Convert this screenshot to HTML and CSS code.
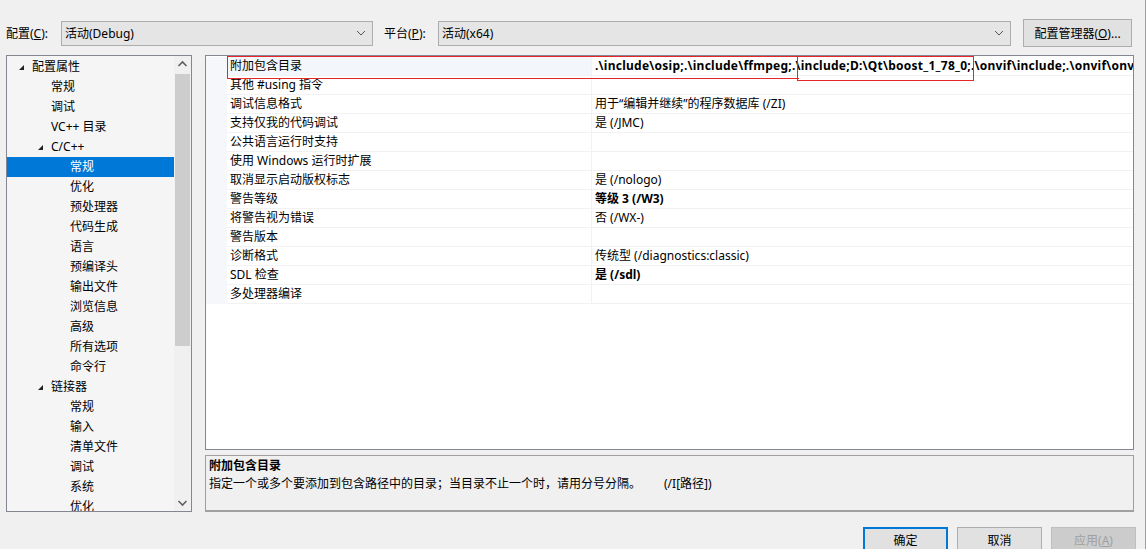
FILE: index.html
```html
<!DOCTYPE html>
<html lang="zh-CN">
<head>
    <meta charset="UTF-8">
    <title>属性页</title>
    <link rel="stylesheet" href="styles.css">
</head>
<body>

<div class="topbar">
    <label class="top-label">配置(<u>C</u>):</label>
    <div class="combo combo-config">
        <span>活动(Debug)</span>
        <svg class="chev" width="10" height="6" viewBox="0 0 10 6"><polyline points="1,1 5,5 9,1" fill="none" stroke="#555" stroke-width="1"/></svg>
    </div>
    <label class="top-label platform-label">平台(<u>P</u>):</label>
    <div class="combo combo-platform">
        <span>活动(x64)</span>
        <svg class="chev" width="10" height="6" viewBox="0 0 10 6"><polyline points="1,1 5,5 9,1" fill="none" stroke="#555" stroke-width="1"/></svg>
    </div>
    <button class="btn btn-manager">配置管理器(<u>O</u>)...</button>
</div>

<div class="main">
    <!-- 左侧树 -->
    <div class="tree">
        <div class="tree-items">
            <div class="node lv1"><span class="tri"></span>配置属性</div>
            <div class="node lv2">常规</div>
            <div class="node lv2">调试</div>
            <div class="node lv2">VC++ 目录</div>
            <div class="node lv2"><span class="tri"></span>C/C++</div>
            <div class="node lv3 selected">常规</div>
            <div class="node lv3">优化</div>
            <div class="node lv3">预处理器</div>
            <div class="node lv3">代码生成</div>
            <div class="node lv3">语言</div>
            <div class="node lv3">预编译头</div>
            <div class="node lv3">输出文件</div>
            <div class="node lv3">浏览信息</div>
            <div class="node lv3">高级</div>
            <div class="node lv3">所有选项</div>
            <div class="node lv3">命令行</div>
            <div class="node lv2"><span class="tri"></span>链接器</div>
            <div class="node lv3">常规</div>
            <div class="node lv3">输入</div>
            <div class="node lv3">清单文件</div>
            <div class="node lv3">调试</div>
            <div class="node lv3">系统</div>
            <div class="node lv3">优化</div>
        </div>
        <div class="vscroll">
            <svg class="arrow" width="17" height="17" viewBox="0 0 17 17"><polyline points="4.5,10 8.5,6 12.5,10" fill="none" stroke="#606060" stroke-width="1.6"/></svg>
            <div class="track"><div class="thumb"></div></div>
            <svg class="arrow" width="17" height="17" viewBox="0 0 17 17"><polyline points="4.5,7 8.5,11 12.5,7" fill="none" stroke="#606060" stroke-width="1.6"/></svg>
        </div>
    </div>

    <div class="right">
        <!-- 属性表 -->
        <div class="grid">
            <div class="row first">
                <div class="gut"></div><div class="name">附加包含目录</div>
                <div class="val bold path">.\include\osip;.\include\ffmpeg;.\include;D:\Qt\boost_1_78_0;.\onvif\include;.\onvif\onvif;.\onvif\plugin</div>
            </div>
            <div class="row"><div class="gut"></div><div class="name">其他 #using 指令</div><div class="val"></div></div>
            <div class="row"><div class="gut"></div><div class="name">调试信息格式</div><div class="val">用于“编辑并继续”的程序数据库 (/ZI)</div></div>
            <div class="row"><div class="gut"></div><div class="name">支持仅我的代码调试</div><div class="val">是 (/JMC)</div></div>
            <div class="row"><div class="gut"></div><div class="name">公共语言运行时支持</div><div class="val"></div></div>
            <div class="row"><div class="gut"></div><div class="name">使用 Windows 运行时扩展</div><div class="val"></div></div>
            <div class="row"><div class="gut"></div><div class="name">取消显示启动版权标志</div><div class="val">是 (/nologo)</div></div>
            <div class="row"><div class="gut"></div><div class="name">警告等级</div><div class="val bold">等级 3 (/W3)</div></div>
            <div class="row"><div class="gut"></div><div class="name">将警告视为错误</div><div class="val">否 (/WX-)</div></div>
            <div class="row"><div class="gut"></div><div class="name">警告版本</div><div class="val"></div></div>
            <div class="row"><div class="gut"></div><div class="name">诊断格式</div><div class="val">传统型 (/diagnostics:classic)</div></div>
            <div class="row"><div class="gut"></div><div class="name">SDL 检查</div><div class="val bold">是 (/sdl)</div></div>
            <div class="row"><div class="gut"></div><div class="name">多处理器编译</div><div class="val"></div></div>

            <!-- 标注框 -->
            <div class="mark mark-row"></div>
            <div class="mark mark-path"></div>
        </div>

        <!-- 说明 -->
        <div class="desc">
            <div class="desc-title">附加包含目录</div>
            <div class="desc-text">指定一个或多个要添加到包含路径中的目录；当目录不止一个时，请用分号分隔。<span class="switch">(/I[路径])</span></div>
        </div>
    </div>
</div>

<div class="bottom">
    <button class="btn btn-ok">确定</button>
    <button class="btn">取消</button>
    <button class="btn disabled">应用(<u>A</u>)</button>
</div>

</body>
</html>
```

FILE: styles.css
```css
/* 属性页样式 */
html, body {
    margin: 0;
    padding: 0;
}
body {
    width: 1146px;
    height: 549px;
    overflow: hidden;
    background: #f0f0f0;
    font-family: "Noto Sans", "Noto Sans CJK SC", sans-serif;
    font-size: 12px;
    color: #000;
    box-sizing: border-box;
    border-right: 1px solid #a0a0a0;
}
u {
    text-decoration: underline;
}

/* 顶部 */
.topbar {
    display: flex;
    align-items: center;
    height: 28px;
    margin-top: 19px;
    padding-left: 6px;
}
.top-label {
    width: 55px;
}
.platform-label {
    margin-left: 11px;
    width: 54px;
}
.combo {
    display: flex;
    align-items: center;
    justify-content: space-between;
    height: 25px;
    box-sizing: border-box;
    border: 1px solid #adadad;
    background: #e5e5e5;
    padding: 0 5px 0 3px;
}
.combo-config {
    width: 312px;
}
.combo-platform {
    width: 573px;
}
.chev {
    margin-right: 1px;
}
.btn {
    font-family: inherit;
    font-size: 12px;
    height: 28px;
    box-sizing: border-box;
    border: 1px solid #adadad;
    background: #e1e1e1;
    padding: 0;
    color: #000;
}
.btn-manager {
    width: 109px;
    margin-left: 12px;
}

/* 主体 */
.main {
    display: flex;
    margin-top: 8px;
    padding-left: 6px;
}
.tree {
    display: flex;
    width: 186px;
    height: 457px;
    box-sizing: border-box;
    border: 1px solid #828790;
    background: #f5f5f5;
    overflow: hidden;
}
.tree-items {
    flex: 1;
    padding-top: 1px;
    overflow: hidden;
}
.node {
    position: relative;
    height: 20px;
    line-height: 20px;
    white-space: nowrap;
}
.lv1 { padding-left: 25px; }
.lv2 { padding-left: 44px; }
.lv3 { padding-left: 63px; }
.selected {
    background: #0078d7;
    color: #fff;
}
.tri {
    position: absolute;
    width: 0;
    height: 0;
    border-left: 5px solid transparent;
    border-bottom: 5px solid #222;
    top: 8px;
}
.lv1 .tri { left: 12px; }
.lv2 .tri { left: 31px; }

.vscroll {
    width: 17px;
    display: flex;
    flex-direction: column;
    background: #f0f0f0;
}
.track {
    flex: 1;
    position: relative;
}
.thumb {
    position: absolute;
    left: 1px;
    right: 1px;
    top: 1px;
    height: 272px;
    background: #cdcdcd;
}

.right {
    display: flex;
    flex-direction: column;
    margin-left: 13px;
    width: 929px;
}
.grid {
    position: relative;
    height: 395px;
    box-sizing: border-box;
    border: 1px solid #828790;
    background: #fff;
    padding-top: 1px;
    overflow: hidden;
}
.row {
    display: grid;
    grid-template-columns: 21px 365px 1fr;
    height: 19px;
    line-height: 18px;
    white-space: nowrap;
}
.gut {
    background: #f5f7fa;
}
.name, .val {
    border-bottom: 1px solid #f2f2f2;
    overflow: hidden;
    padding-left: 3px;
}
.name {
    border-right: 1px solid #f2f2f2;
}
.first .name {
    background: #f3f6fb;
}
.val {
    padding-left: 3px;
}
.bold {
    font-weight: bold;
}
.path {
    letter-spacing: 0.25px;
}
.mark {
    position: absolute;
    border: 1px solid #e8262a;
    box-sizing: border-box;
}
.mark-row {
    left: 21px;
    top: 0px;
    width: 572px;
    height: 23px;
    border-right: none;
}
.mark-path {
    left: 591px;
    top: 0px;
    width: 177px;
    height: 25px;
}

.desc {
    margin-top: 5px;
    height: 57px;
    box-sizing: border-box;
    border: 1px solid #a0a0a0;
    border-bottom-width: 2px;
    background: #f0f0f0;
    padding: 1px 3px;
    line-height: 18px;
}
.desc-title {
    font-weight: bold;
}
.switch {
    margin-left: 23px;
}

/* 底部按钮 */
.bottom {
    display: flex;
    justify-content: flex-end;
    gap: 9px;
    margin-top: 15px;
    padding-right: 9px;
}
.bottom .btn {
    width: 85px;
    height: 26px;
}
.btn-ok {
    border: 2px solid #0078d7;
}
.disabled {
    background: #cccccc;
    border-color: #bfbfbf;
    color: #a0a0a0;
}
```
